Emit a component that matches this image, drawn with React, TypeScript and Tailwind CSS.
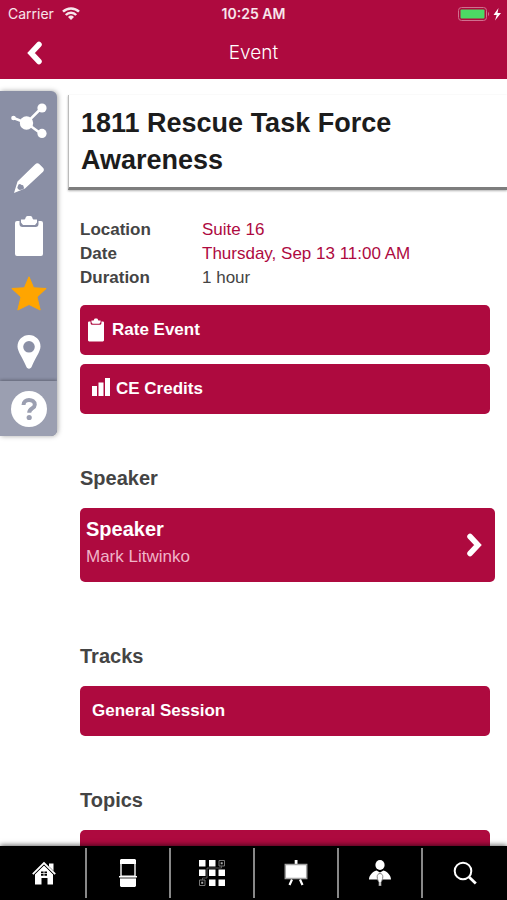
import type { ReactNode } from "react";

// Type definitions
interface IconLink {
  label: string;
  icon: ReactNode;
}

interface Detail {
  name: string;
  value: string;
  href?: string;
}

const ClipboardIcon = ({ className }: { className: string }) => (
  <svg viewBox="0 0 28 40" className={className} fill="currentColor">
    <path d="M2 5h2.500v3a3 3 0 0 0 3 3h13a3 3 0 0 0 3-3V5H26a2 2 0 0 1 2 2v31a2 2 0 0 1-2 2H2a2 2 0 0 1-2-2V7a2 2 0 0 1 2-2z" />
    <path d="M6 3.500h3.500c1 0 1-3.500 3-3.500h3c2 0 2 3.500 3 3.500H22v3l-2 2.500H8L6 6.500z" />
  </svg>
);

const ChevronIcon = ({ left }: { left?: boolean }) => (
  <svg viewBox="0 0 16 24" className="h-6 w-4" fill="none" stroke="currentColor" strokeWidth={5.500} strokeLinecap="round">
    {left ? <path d="M12 3.500 4 12l8 8.500" /> : <path d="M4 3.500 12 12l-8 8.500" />}
  </svg>
);

const sideLinks: IconLink[] = [
  {
    label: "Share",
    icon: (
      <svg viewBox="0 0 36 36" className="size-9" fill="currentColor">
        <path d="M2.500 16 15.500 21 30.500 6M15.500 21l15 11" fill="none" stroke="currentColor" strokeWidth={2.500} />
        <circle cx="2.500" cy="16" r="2.300" />
        <circle cx="15.500" cy="21" r="6.700" />
        <circle cx="31" cy="6" r="4.600" />
        <circle cx="31" cy="31.400" r="4.600" />
      </svg>
    ),
  },
  {
    label: "Notes",
    icon: (
      <svg viewBox="0 0 32 32" className="size-8" fill="currentColor">
        <path d="M22 2.500c1.500-1.500 3-1.700 4.500-.300l3.500 3.500c1.300 1.300 1.200 3-.200 4.300L12 26.500 1 31l3.500-11.500z" />
        <path d="M5.500 22.500c1.500-1.500 3 .200 3 .500 1.500-.500 2.500.700 2 2 .700.200.700 1.500-.300 2.200L6.800 28c-1.500-.500-2.300-1.500-2.500-2.500z" fill="#8a8fa5" />
      </svg>
    ),
  },
  { label: "Survey", icon: <ClipboardIcon className="h-10 w-7" /> },
  {
    label: "Favorite",
    icon: (
      <svg viewBox="0 0 36 36" className="size-9 text-[#ffa500]" fill="currentColor" stroke="currentColor" strokeLinejoin="round">
        <path d="m18 .800 4.600 11 12.600.700-9.200 8.500 3.200 13L18 28.500 6.800 34 10 21 .800 12.500l12.600-.700z" />
      </svg>
    ),
  },
  {
    label: "Map",
    icon: (
      <svg viewBox="0 0 24 34" className="h-[34px] w-6" fill="currentColor" fillRule="evenodd">
        <path d="M12 0a11.500 11.500 0 0 1 11.500 11.500c0 5-5.500 12-8.500 19.500-1.300 3.500-4.700 3.500-6 0C6 23.500.500 16.500.500 11.500A11.500 11.500 0 0 1 12 0zm0 6a5.800 5.800 0 1 0 0 11.600A5.800 5.800 0 0 0 12 6z" />
      </svg>
    ),
  },
  {
    label: "Help",
    icon: (
      <svg viewBox="0 0 36 36" className="size-9">
        <circle cx="18" cy="18" r="18" fill="#fff" />
        <path d="M12.500 14c0-3.500 2.500-5 5.500-5s5.800 1.500 5.800 4.700c0 3.800-5.600 3.800-5.600 8" fill="none" stroke="#9b9fb1" strokeWidth={4} />
        <circle cx="18.200" cy="26.500" r="2.600" fill="#9b9fb1" />
      </svg>
    ),
  },
];

const tabs: IconLink[] = [
  {
    label: "Home",
    icon: (
      <svg viewBox="0 0 24 24" className="size-6" fill="currentColor">
        <path d="M17 2.500h4.500v9L17 7z" />
        <path d="M12 4 21 13v10.500h-5.500V17h-6v6.500H3V13z" />
        <path d="M.800 13.500 12 2.500l11.200 11" fill="none" stroke="#000" strokeWidth={3} />
        <path d="M.800 13.200 12 2l11.200 11.200" fill="none" stroke="currentColor" strokeWidth={1.800} />
        <path d="M9 10.500h2.600v1.800H9zM12.400 10.500H15v1.800h-2.600zM9 13h2.600v1.800H9zM12.400 13H15v1.800h-2.600z" fill="#000" />
      </svg>
    ),
  },
  {
    label: "Exhibitors",
    icon: (
      <svg viewBox="0 0 18 28" className="h-7 w-[18px]" fill="currentColor">
        <path d="M2 0h14l1 1v4h-.300v12H18v1.500h-1V27l-1 1H2l-1-1v-8.500H0V17h1.300V5H1V1z" />
        <path d="M2.700 5h12.600v11.500H2.700z" fill="#000" />
        <path d="M1 19h16" stroke="#000" strokeWidth={0.800} />
      </svg>
    ),
  },
  {
    label: "Floor plan",
    icon: (
      <svg viewBox="0 0 26 26" className="size-[26px]" fill="currentColor">
        <path d="M0 0h6.500v6.500H0zM10 0h6.500v6.500H10zM0 9.500h6.500V16H0zM10 9.500h6.500V16H10zM19.500 9.500H26V16h-6.500zM10 19.500h6.500V26H10zM19.500 19.500H26V26h-6.500z" />
        <path d="M20 .500h5.500V6H20zM.500 20H6v5.500H.500z" fill="none" stroke="#777" />
        <path d="M21.700 2.200h2v2h-2zM2.200 21.700h2v2h-2z" fill="#aaa" />
        <path d="M22.500 6v2H8v10H3.500v2" fill="none" stroke="#777" strokeWidth={0.700} />
      </svg>
    ),
  },
  {
    label: "Sessions",
    icon: (
      <svg viewBox="0 0 24 26" className="h-[26px] w-6" fill="currentColor">
        <path d="M10.700 0h2.800v4h-2.800z" />
        <path d="M1.300 4.500h21.400v14H1.300z" stroke="#a3a3a3" strokeWidth={1.500} />
        <path d="m8 19.500-2.500 5.500M16 19.500l2.500 5.500" stroke="currentColor" strokeWidth={2.200} />
      </svg>
    ),
  },
  {
    label: "Speakers",
    icon: (
      <svg viewBox="0 0 24 26" className="h-[26px] w-6" fill="currentColor">
        <ellipse cx="12" cy="5" rx="4.600" ry="5" />
        <path d="M8.500 10.500 12 12.500l3.500-2c4 1 7.500 5 7.500 9H1c0-4 3.500-8 7.500-9z" />
        <path d="M12 13.500c1.700 0 2.800 1.300 2.800 3.200 0 2.300-1 4.500-1.800 5.500V26h-2v-3.800c-.800-1-1.800-3.200-1.800-5.500 0-1.900 1.100-3.200 2.800-3.200z" stroke="#777" strokeWidth={0.900} />
      </svg>
    ),
  },
  {
    label: "Search",
    icon: (
      <svg viewBox="0 0 24 24" className="size-6" fill="none" stroke="currentColor">
        <circle cx="10" cy="10" r="8.300" strokeWidth={2} />
        <path d="m16 16 6.800 6.500" strokeWidth={2.800} />
      </svg>
    ),
  },
];

const details: Detail[] = [
  { name: "Location", value: "Suite 16", href: "#location" },
  { name: "Date", value: "Thursday, Sep 13 11:00 AM", href: "#date" },
  { name: "Duration", value: "1 hour" },
];

const Header = () => (
  <header className="shrink-0 bg-[#ae0a3f] font-[Inter,sans-serif] text-white">
    <div className="grid h-[27px] grid-cols-3 items-center px-1.5 text-sm text-white/90">
      <div className="flex items-center gap-2 pl-0.5">
        <span>Carrier</span>
        <svg viewBox="0 0 18 13" className="h-[13px] w-[18px]" fill="none" stroke="currentColor" strokeWidth={2.500}>
          <path d="M1 4.700a11.500 11.500 0 0 1 16 0M3.800 8a7.200 7.200 0 0 1 10.400 0" />
          <path d="M6 10a4.400 4.400 0 0 1 6 0l-3 3z" fill="currentColor" stroke="none" />
        </svg>
      </div>
      <span className="text-center font-semibold">10:25 AM</span>
      <svg viewBox="0 0 44 14" className="h-3.5 w-11 justify-self-end">
        <rect x="1.500" y="0.500" width="28" height="13" rx="3" fill="none" stroke="#d0708f" />
        <rect x="3.500" y="2.500" width="24" height="9" rx="1" fill="#4cd964" />
        <path d="M31 5c1.500.500 1.500 3.500 0 4z" fill="#d0708f" />
        <path d="M41.500 1 36.500 8h3.200L38 13.500 44 6h-3.500z" fill="#fff" />
      </svg>
    </div>
    <div className="grid h-[52px] grid-cols-3 items-center px-[27px]">
      <button type="button" aria-label="Back" className="justify-self-start">
        <ChevronIcon left />
      </button>
      <h1 className="text-center text-[19px] font-light">Event</h1>
    </div>
  </header>
);

const SectionTitle = ({ children }: { children: ReactNode }) => (
  <h3 className="mt-[52px] mb-[18px] text-xl leading-6 font-bold text-[#444]">{children}</h3>
);

const App: React.FC = () => {
  return (
    <div className="flex h-screen flex-col overflow-hidden bg-white font-['Liberation_Sans',Arial,sans-serif]">
      <Header />

      <div className="flex min-h-0 flex-1 items-start overflow-hidden">
        {/* Side toolbar */}
        <aside className="mt-3 w-[57px] shrink-0 overflow-hidden rounded-r-md bg-[#8a8fa5] text-white shadow-[1px_0_5px_rgba(0,0,0,0.35)]">
          {sideLinks.map((link) => (
            <button
              key={link.label}
              type="button"
              aria-label={link.label}
              className="flex h-[58px] w-full items-center justify-center last:h-[55px] last:bg-[#9b9fb1] last:shadow-[0_-1px_3px_rgba(0,0,0,0.3)]"
            >
              {link.icon}
            </button>
          ))}
        </aside>

        <main className="min-w-0 flex-1 pl-[11px]">
          <div className="mt-4 border-b-3 border-l border-b-[#7d7d7d] border-l-[#bbb] pt-[10px] pb-2 pl-3 shadow-[0_1px_2px_rgba(0,0,0,0.3)]">
            <h2 className="text-[27px] leading-[37px] font-bold text-[#1c1c1c]">1811 Rescue Task Force Awareness</h2>
          </div>

          <div className="pr-[17px] pl-3">
            <dl className="mt-7 mb-[15px] text-[17px] leading-6">
              {details.map((detail) => (
                <div key={detail.name} className="flex">
                  <dt className="w-[122px] shrink-0 font-bold text-[#444]">{detail.name}</dt>
                  <dd className="text-[#444]">
                    {detail.href ? (
                      <a href={detail.href} className="text-[#ae0a3f]">
                        {detail.value}
                      </a>
                    ) : (
                      detail.value
                    )}
                  </dd>
                </div>
              ))}
            </dl>

            <div className="space-y-[9px] text-[17px] font-bold text-white">
              <button type="button" className="flex h-[50px] w-full items-center gap-2 rounded-[5px] bg-[#ae0a3f] px-2">
                <ClipboardIcon className="h-6 w-4" />
                Rate Event
              </button>
              <button type="button" className="flex h-[50px] w-full items-center gap-1.5 rounded-[5px] bg-[#ae0a3f] px-3">
                <svg viewBox="0 0 18 22" className="h-[22px] w-[18px]" fill="currentColor">
                  <path d="M0 8h5v10H0zM6.500 4.500h5V18h-5zM13 0h5v18h-5z" />
                </svg>
                CE Credits
              </button>
            </div>

            <SectionTitle>Speaker</SectionTitle>
            <a
              href="#speaker"
              className="-mr-[5px] mb-[62px] flex h-[74px] items-center justify-between rounded-[5px] bg-[#ae0a3f] pr-[13px] pl-1.5 text-white"
            >
              <span className="pb-1">
                <span className="block text-xl leading-7 font-bold">Speaker</span>
                <span className="block text-[17px] leading-7 text-[#f0b4c8]">Mark Litwinko</span>
              </span>
              <ChevronIcon />
            </a>

            <SectionTitle>Tracks</SectionTitle>
            <button type="button" className="h-[50px] w-full rounded-[5px] bg-[#ae0a3f] px-3 text-left text-[17px] font-bold text-white">
              General Session
            </button>

            <SectionTitle>Topics</SectionTitle>
            <div className="h-[50px] rounded-[5px] bg-[#ae0a3f]"></div>
          </div>
        </main>
      </div>

      <nav className="relative grid h-[54px] shrink-0 grid-cols-6 divide-x-2 divide-[#888] bg-black py-0.5 pl-[3px] text-white shadow-[0_-1px_5px_rgba(0,0,0,0.6)]">
        {tabs.map((tab) => (
          <a key={tab.label} href="#" aria-label={tab.label} className="flex items-center justify-center">
            {tab.icon}
          </a>
        ))}
      </nav>
    </div>
  );
};

export default App;
